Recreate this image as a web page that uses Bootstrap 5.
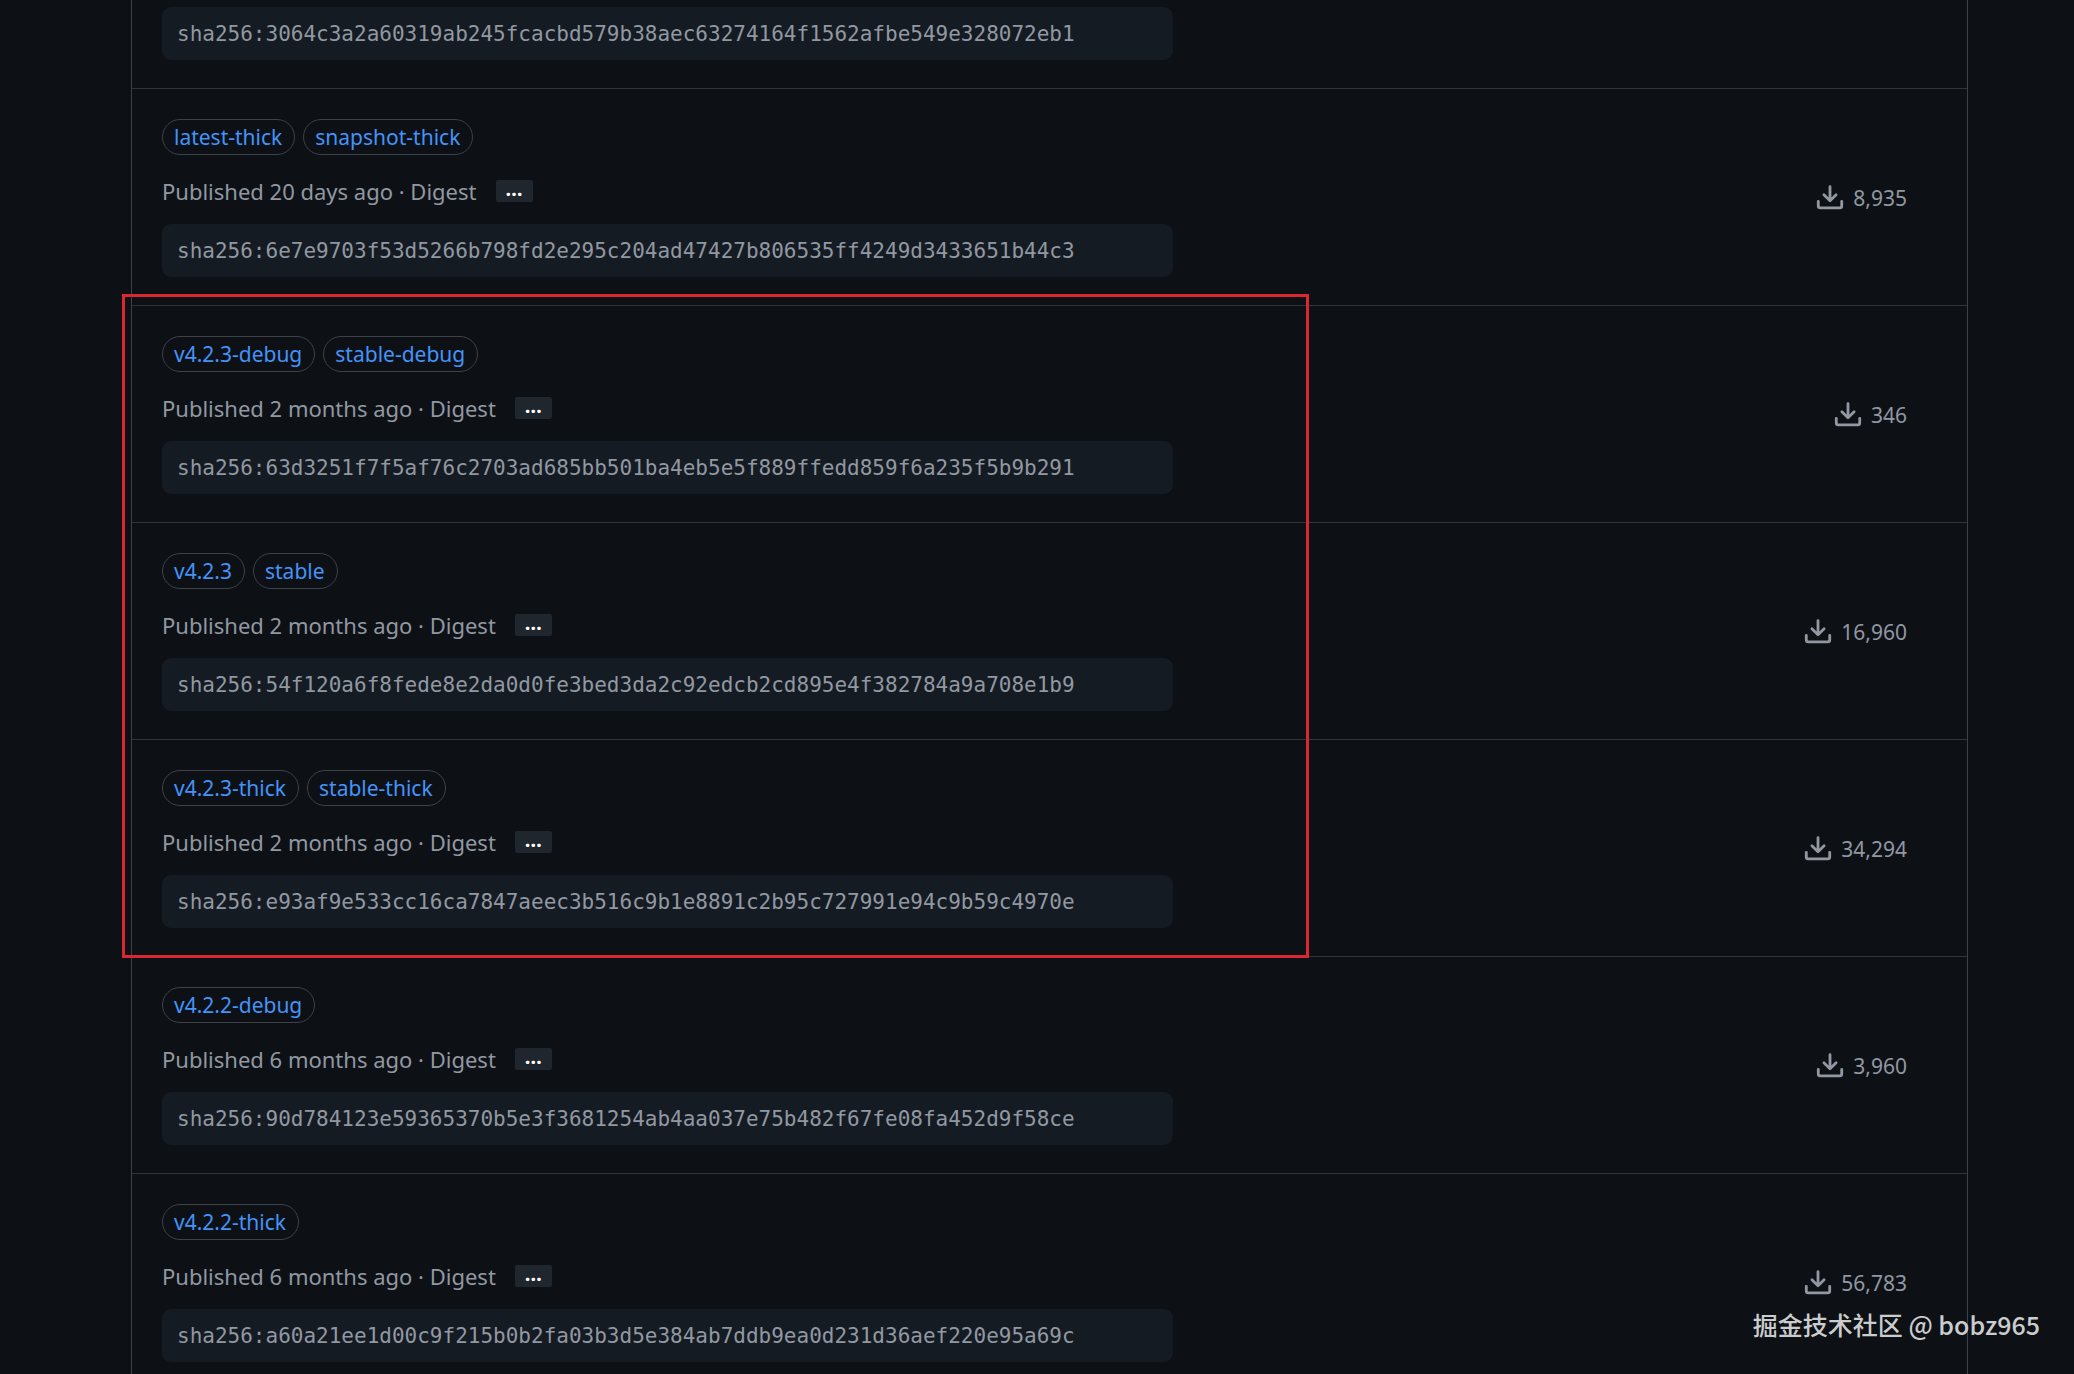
<!DOCTYPE html>
<html lang="en" data-bs-theme="dark">
<head>
<meta charset="utf-8">
<meta name="viewport" content="width=device-width, initial-scale=1">
<title>Package versions</title>
<link rel="stylesheet" href="https://cdn.jsdelivr.net/npm/bootstrap@5.3.0/dist/css/bootstrap.min.css">
<style>
  body { background: #0d1116; color: #9198a1; font-family: "Noto Sans", sans-serif; font-size: 22px; line-height: 36px; }
  .page-wrap { padding: 0 106px 0 131px; }
  .versions { border: solid #3d4249; border-width: 0 1px; }
  .version { border-bottom: 1px solid #30353c; }
  .version-main { padding: 30px 29px 28px 30px; }
  .version-cut .version-main { padding-top: 7px; }
  .version-count { padding: 1px 60px 0 0; font-size: 21px; }
  .tag-list { gap: 8px; margin-bottom: 18px; }
  .tag-pill { border: 1px solid #3d4249; border-radius: 18px; padding: 0 12px 0 11px; height: 36px; line-height: 34px; font-size: 21px; color: #4493f8; text-decoration: none; }
  .meta { gap: 19px; margin-bottom: 15px; }
  .more-btn { width: 37px; height: 22px; border: 0; border-radius: 2px; padding: 0 0 4px; background: #20262d; color: #fff; font-size: 20px; font-weight: 700; line-height: 16px; }
  .digest { background: #151b23; border-radius: 9px; padding: 0 15px; height: 53px; line-height: 54px; font-family: "DejaVu Sans Mono", monospace; font-size: 21px; color: #9198a1; white-space: nowrap; }
  .highlight-frame { position: absolute; top: -12px; bottom: -1px; left: -10px; width: 64.7%; border: 3px solid #da2731; pointer-events: none; }
  .watermark { position: absolute; right: 34px; bottom: 32px; font-family: "Noto Sans CJK SC", sans-serif; font-size: 25px; font-weight: 500; color: #cbccce; }
</style>
</head>
<body class="vh-100 overflow-hidden position-relative">
<svg class="d-none" aria-hidden="true">
  <symbol id="download" viewBox="0 0 16 16"><path d="M2.75 14A1.75 1.75 0 0 1 1 12.25v-2.5a.75.75 0 0 1 1.5 0v2.5c0 .138.112.25.25.25h10.5a.25.25 0 0 0 .25-.25v-2.5a.75.75 0 0 1 1.5 0v2.5A1.75 1.75 0 0 1 13.25 14Z"/><path d="M7.25 7.689V2a.75.75 0 0 1 1.5 0v5.689l1.97-1.969a.749.749 0 1 1 1.06 1.06l-3.25 3.25a.749.749 0 0 1-1.06 0L4.22 6.78a.749.749 0 1 1 1.06-1.06l1.97 1.969Z"/></symbol>
</svg>
<main class="page-wrap">
  <div class="versions">
    <div class="version version-cut row g-0">
      <div class="version-main col-7"><div class="digest">sha256:3064c3a2a60319ab245fcacbd579b38aec63274164f1562afbe549e328072eb1</div></div>
    </div>
    <div class="version row g-0">
      <div class="version-main col-7">
        <div class="tag-list d-flex"><a class="tag-pill" href="#">latest-thick</a><a class="tag-pill" href="#">snapshot-thick</a></div>
        <div class="meta d-flex align-items-center"><span>Published 20 days ago · Digest</span><button type="button" class="more-btn" aria-label="Toggle digest">…</button></div>
        <div class="digest">sha256:6e7e9703f53d5266b798fd2e295c204ad47427b806535ff4249d3433651b44c3</div>
      </div>
      <div class="version-count col-5 d-flex align-items-center justify-content-end gap-2"><svg width="30" height="30" fill="currentColor" aria-hidden="true"><use href="#download"/></svg><span>8,935</span></div>
    </div>
    <div class="position-relative">
      <div class="version row g-0">
        <div class="version-main col-7">
          <div class="tag-list d-flex"><a class="tag-pill" href="#">v4.2.3-debug</a><a class="tag-pill" href="#">stable-debug</a></div>
          <div class="meta d-flex align-items-center"><span>Published 2 months ago · Digest</span><button type="button" class="more-btn" aria-label="Toggle digest">…</button></div>
          <div class="digest">sha256:63d3251f7f5af76c2703ad685bb501ba4eb5e5f889ffedd859f6a235f5b9b291</div>
        </div>
        <div class="version-count col-5 d-flex align-items-center justify-content-end gap-2"><svg width="30" height="30" fill="currentColor" aria-hidden="true"><use href="#download"/></svg><span>346</span></div>
      </div>
      <div class="version row g-0">
        <div class="version-main col-7">
          <div class="tag-list d-flex"><a class="tag-pill" href="#">v4.2.3</a><a class="tag-pill" href="#">stable</a></div>
          <div class="meta d-flex align-items-center"><span>Published 2 months ago · Digest</span><button type="button" class="more-btn" aria-label="Toggle digest">…</button></div>
          <div class="digest">sha256:54f120a6f8fede8e2da0d0fe3bed3da2c92edcb2cd895e4f382784a9a708e1b9</div>
        </div>
        <div class="version-count col-5 d-flex align-items-center justify-content-end gap-2"><svg width="30" height="30" fill="currentColor" aria-hidden="true"><use href="#download"/></svg><span>16,960</span></div>
      </div>
      <div class="version row g-0">
        <div class="version-main col-7">
          <div class="tag-list d-flex"><a class="tag-pill" href="#">v4.2.3-thick</a><a class="tag-pill" href="#">stable-thick</a></div>
          <div class="meta d-flex align-items-center"><span>Published 2 months ago · Digest</span><button type="button" class="more-btn" aria-label="Toggle digest">…</button></div>
          <div class="digest">sha256:e93af9e533cc16ca7847aeec3b516c9b1e8891c2b95c727991e94c9b59c4970e</div>
        </div>
        <div class="version-count col-5 d-flex align-items-center justify-content-end gap-2"><svg width="30" height="30" fill="currentColor" aria-hidden="true"><use href="#download"/></svg><span>34,294</span></div>
      </div>
      <div class="highlight-frame"></div>
    </div>
    <div class="version row g-0">
      <div class="version-main col-7">
        <div class="tag-list d-flex"><a class="tag-pill" href="#">v4.2.2-debug</a></div>
        <div class="meta d-flex align-items-center"><span>Published 6 months ago · Digest</span><button type="button" class="more-btn" aria-label="Toggle digest">…</button></div>
        <div class="digest">sha256:90d784123e59365370b5e3f3681254ab4aa037e75b482f67fe08fa452d9f58ce</div>
      </div>
      <div class="version-count col-5 d-flex align-items-center justify-content-end gap-2"><svg width="30" height="30" fill="currentColor" aria-hidden="true"><use href="#download"/></svg><span>3,960</span></div>
    </div>
    <div class="version row g-0">
      <div class="version-main col-7">
        <div class="tag-list d-flex"><a class="tag-pill" href="#">v4.2.2-thick</a></div>
        <div class="meta d-flex align-items-center"><span>Published 6 months ago · Digest</span><button type="button" class="more-btn" aria-label="Toggle digest">…</button></div>
        <div class="digest">sha256:a60a21ee1d00c9f215b0b2fa03b3d5e384ab7ddb9ea0d231d36aef220e95a69c</div>
      </div>
      <div class="version-count col-5 d-flex align-items-center justify-content-end gap-2"><svg width="30" height="30" fill="currentColor" aria-hidden="true"><use href="#download"/></svg><span>56,783</span></div>
    </div>
  </div>
</main>
<div class="watermark">掘金技术社区 @ bobz965</div>
<script src="https://cdn.jsdelivr.net/npm/bootstrap@5.3.0/dist/js/bootstrap.bundle.min.js"></script>
</body>
</html>
